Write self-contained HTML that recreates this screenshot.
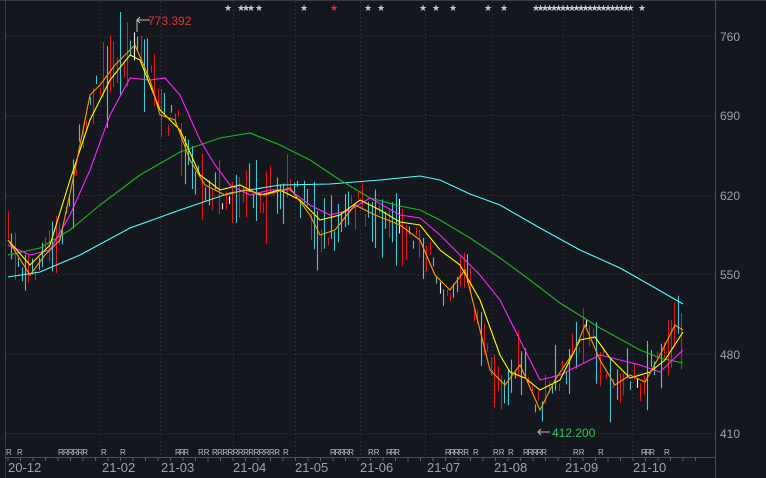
<!DOCTYPE html>
<html><head><meta charset="utf-8"><style>
html,body{margin:0;padding:0;background:#14171d;width:766px;height:478px;overflow:hidden;font-family:"Liberation Sans",sans-serif}
#c{position:absolute;left:0;top:0}
</style></head><body>
<svg id="c" width="766" height="478" xmlns="http://www.w3.org/2000/svg">
<g id="grid" stroke="#3a3f48" stroke-width="1" stroke-dasharray="1,3"></g>
<g id="cand"></g>
<g id="lines" fill="none" stroke-width="1.1"></g>
<line x1="715.5" y1="0" x2="715.5" y2="478" stroke="#4a4d55"/>
<line x1="5.5" y1="0" x2="5.5" y2="478" stroke="#3a3d44"/>
<line x1="5" y1="457.5" x2="715" y2="457.5" stroke="#4a4d55"/>
<line x1="0" y1="0.5" x2="766" y2="0.5" stroke="#3a3d44"/>
<polyline points="150,20 137,20 137,32" fill="none" stroke="#bbb"/>
<polyline points="550,432 538,432" fill="none" stroke="#bbb"/>
<polyline points="541,429 538,432 541,435" fill="none" stroke="#bbb"/>
<polyline points="140,17 137,20 140,23" fill="none" stroke="#bbb"/>
<text x="148" y="25" fill="#e8323a" font-size="12" font-family="Liberation Sans">773.392</text>
<text x="552" y="437" fill="#2fc25b" font-size="12" font-family="Liberation Sans">412.200</text>
<g fill="#9aa3ad" font-size="12" font-family="Liberation Sans">
<text x="720" y="41">760</text><text x="720" y="120">690</text><text x="720" y="200">620</text>
<text x="720" y="279">550</text><text x="720" y="359">480</text><text x="720" y="438">410</text>
</g>
<g fill="#9aa3ad" font-size="13" font-family="Liberation Sans">
<text x="8" y="472">20-12</text><text x="102" y="472">21-02</text><text x="161" y="472">21-03</text>
<text x="233" y="472">21-04</text><text x="295" y="472">21-05</text><text x="360" y="472">21-06</text>
<text x="427" y="472">21-07</text><text x="494" y="472">21-08</text><text x="565" y="472">21-09</text>
<text x="633" y="472">21-10</text>
</g>
<g fill="#b8bcc4" font-size="8" font-family="Liberation Sans" textLength="0">
<text x="6" y="455">R</text><text x="17" y="455">R</text><text x="58" y="455" textLength="30">RRRRRR</text>
<text x="101" y="455">R</text><text x="120" y="455">R</text>
<text x="175" y="455" textLength="14">RRR</text><text x="198" y="455">RR</text><text x="212" y="455" textLength="68">RRRRRRRRRRRRR</text>
<text x="283" y="455">R</text>
<text x="330" y="455" textLength="24">RRRRR</text><text x="368" y="455">RR</text><text x="386" y="455" textLength="14">RRR</text>
<text x="445" y="455" textLength="24">RRRR R</text><text x="473" y="455">R</text><text x="493" y="455">RR</text><text x="508" y="455">R</text>
<text x="523" y="455" textLength="24">RRRRR</text><text x="573" y="455">RR</text><text x="598" y="455">R</text>
<text x="641" y="455" textLength="14">RRR</text><text x="664" y="455">R</text>
</g>
<g id="stars" fill="#c8ccd4" font-size="9" font-family="DejaVu Sans"></g>
<g stroke="#5a5d64" id="ticks"></g>
</svg>
<script>
var NS="http://www.w3.org/2000/svg";
function el(p,t,a){var e=document.createElementNS(NS,t);for(var k in a)e.setAttribute(k,a[k]);p.appendChild(e);return e;}
var g=document.getElementById('grid');
[36,115,195,274,354,433].forEach(function(y){el(g,'line',{x1:6,x2:715,y1:y+.5,y2:y+.5});});
[100,160,233,295,360,425,492,563,632].forEach(function(x){el(g,'line',{x1:x+.5,x2:x+.5,y1:2,y2:457});});
var tk=document.getElementById('ticks');
for(var x=8;x<700;x+=12.5)el(tk,'line',{x1:x,x2:x,y1:457,y2:461});
var st=document.getElementById('stars');
var sx=[227,240,245,250,258,303,333,367,380,422,435,452,487,503,641];
for(var x=535;x<630;x+=4.5)sx.push(x);
sx.forEach(function(x){var t=el(st,'text',{x:x-3,y:11});t.textContent='★';if(x==333)t.setAttribute('fill','#e8323a');});
function P(s){return s.split(' ').map(function(p){return p.split(',').map(Number);});}
var L={
cy:["#5ff","8,277 40,272 80,255 130,228 180,210 230,193 280,185 330,184 380,180 420,176 440,180 470,194 500,205 540,228 580,250 620,268 650,285 683,304"],
gr:["#1db91d","8,255 40,248 70,230 100,205 140,175 180,152 220,138 250,133 280,145 310,160 340,180 370,198 400,206 420,210 440,220 470,238 500,258 530,280 560,303 600,328 640,350 660,358 683,363"],
mg:["#f2f","8,245 30,255 50,250 70,215 90,170 110,115 130,78 150,80 165,78 180,95 200,140 215,165 230,185 250,195 270,190 290,190 310,205 330,215 350,210 370,198 400,215 420,218 440,235 460,255 480,275 500,300 520,340 540,380 560,375 580,365 600,355 620,360 640,365 660,372 683,350"],
ye:["#ff0","8,240 30,265 50,245 70,180 90,120 110,80 130,55 140,60 160,110 180,130 200,175 220,190 240,185 260,195 280,190 300,200 320,220 340,215 360,200 380,210 400,222 420,225 440,250 460,265 480,300 500,355 510,372 525,378 540,390 560,380 580,340 595,337 610,358 630,378 650,372 665,360 683,332"],
or:["#f90","8,240 30,275 45,255 60,240 75,170 90,95 100,85 115,65 135,45 150,80 160,115 175,120 190,160 205,185 225,195 245,190 265,195 290,188 310,215 320,235 335,230 355,205 375,215 400,225 420,240 435,275 450,290 465,270 480,330 490,370 505,385 520,365 540,410 555,380 575,350 585,325 600,360 615,385 630,375 645,382 660,355 675,325 683,330"]};
var seed=7;function r(){seed=(seed*16807)%2147483647;return seed/2147483647;}
function interp(pts,x){for(var i=1;i<pts.length;i++){if(x<=pts[i][0]){var a=pts[i-1],b=pts[i];return a[1]+(b[1]-a[1])*(x-a[0])/(b[0]-a[0]);}}return pts[pts.length-1][1];}
var op=P(L.or[1]),cd=document.getElementById('cand');
for(var x=8;x<=684;x+=3.4){var c=interp(op,x)+(r()-.5)*30;var h=6+r()*r()*80;var col=r()<.5?'#e01818':'#46c8d0';if(r()<.04)col='#eee';
el(cd,'line',{x1:Math.round(x)+.5,x2:Math.round(x)+.5,y1:c-h/2,y2:c+h/2,stroke:col,'stroke-width':1.1});}
var lg=document.getElementById('lines');
['cy','gr','mg','ye','or'].forEach(function(k){el(lg,'polyline',{points:L[k][1],stroke:L[k][0]});});
</script>
</body></html>
